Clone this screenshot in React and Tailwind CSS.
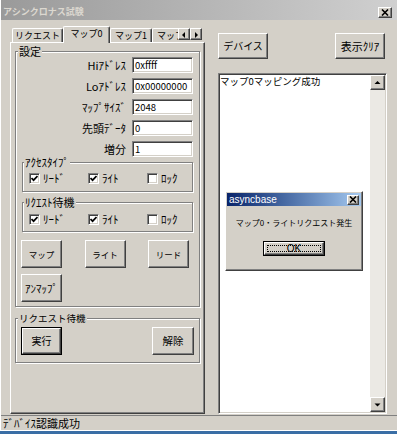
import clsx from "clsx"

const raised = "border border-t-white border-l-white border-r-[#404040] border-b-[#404040] shadow-[inset_-1px_-1px_0_#808080]"
const sunken = "border border-t-[#808080] border-l-[#808080] border-r-white border-b-white shadow-[inset_1px_1px_0_#404040,inset_-1px_-1px_0_#d4d0c8]"
const etched = "min-w-0 border border-[#808080] shadow-[inset_1px_1px_0_#ffffff,1px_1px_0_#ffffff]"

export default function App() {
  return (
    <div className="relative w-[397px] h-[434px] bg-[#3a6ea5] overflow-hidden font-['Noto_Sans_CJK_JP',sans-serif] text-black leading-none">
      <div className="h-[431px] flex flex-col bg-[#d4d0c8] border-l border-l-white">
        {/* title bar */}
        <div className="h-[20px] shrink-0 flex items-center justify-between pt-[4px] pl-[2px] pr-[5px] bg-gradient-to-r from-[#9a9a9a] to-[#d0d0d0]">
          <span className="text-[9px] font-bold text-[#dcd8d0] leading-[12px]">アシンクロナス試験</span>
          <CloseBox className="w-[14px] h-[11px]" />
        </div>

        {/* body */}
        <div className="flex-1 flex pl-[9px] pt-[6px] pb-[1px] min-h-0">
          {/* tab control */}
          <div className="w-[195px] flex flex-col">
            <div className="relative z-10 h-[16px] flex items-end pl-[2px]">
              <div className="w-[166px] flex items-end overflow-x-clip">
                <Tab className="w-[51px]">リクエスト</Tab>
                <Tab className="w-[47px]" selected>マップ0</Tab>
                <Tab className="w-[42px]">マップ1</Tab>
                <Tab className="w-[42px]">マップ2</Tab>
              </div>
              <div className="flex mb-[2px]">
                <ArrowBtn dir="left" />
                <ArrowBtn dir="right" />
              </div>
            </div>

            <div className={clsx("flex-1 pl-[4px] pt-[3px]", raised)}>
              <fieldset className={clsx("w-[185px] pb-[4px]", etched)}>
                <legend className="ml-[2px] px-[1px] text-[11px] leading-[10px] bg-[#d4d0c8]">設定</legend>
                <div className="pt-[1px] flex flex-col gap-[5px]">
                  <Field label="Hiｱﾄﾞﾚｽ" value="0xffff" />
                  <Field label="Loｱﾄﾞﾚｽ" value="0x00000000" />
                  <Field label="ﾏｯﾌﾟｻｲｽﾞ" value="2048" />
                  <Field label="先頭ﾃﾞｰﾀ" value="0" />
                  <Field label="増分" value="1" />
                </div>

                <fieldset className={clsx("mx-[6px] pt-[5px] pb-[6px]", etched)}>
                  <legend className="ml-[1px] px-[1px] text-[11px] leading-[10px] bg-[#d4d0c8]">ｱｸｾｽﾀｲﾌﾟ</legend>
                  <CheckRow />
                </fieldset>

                <fieldset className={clsx("mx-[6px] mt-[5px] pt-[6px] pb-[5px]", etched)}>
                  <legend className="ml-[1px] px-[1px] text-[11px] leading-[10px] bg-[#d4d0c8]">ﾘｸｴｽﾄ待機</legend>
                  <CheckRow />
                </fieldset>

                <div className="flex justify-between w-[168px] ml-[5px] mt-[8px]">
                  <Btn className="w-[41px] h-[28px] text-[8.5px]">マップ</Btn>
                  <Btn className="w-[41px] h-[28px] text-[8.5px]">ライト</Btn>
                  <Btn className="w-[41px] h-[28px] text-[8.5px]">リード</Btn>
                </div>
                <div className="ml-[5px] mt-[6px]">
                  <Btn className="w-[41px] h-[28px] text-[11px]">ｱﾝﾏｯﾌﾟ</Btn>
                </div>
              </fieldset>

              <fieldset className={clsx("w-[185px] mt-[6px] pt-[4px] pb-[7px]", etched)}>
                <legend className="ml-[2px] px-[1px] text-[9.5px] leading-[10px] bg-[#d4d0c8]">リクエスト待機</legend>
                <div className="flex justify-between px-[5px]">
                  <Btn isDefault className="w-[41px] h-[28px] text-[10px]">実行</Btn>
                  <Btn className="w-[42px] h-[28px] text-[10.5px]">解除</Btn>
                </div>
              </fieldset>
            </div>
          </div>

          {/* right column */}
          <div className="ml-[13px] w-[169px] flex flex-col">
            <div className="mt-[7px] flex justify-between pr-[2px]">
              <Btn className="w-[50px] h-[26px] text-[10px]">デバイス</Btn>
              <Btn className="w-[50px] h-[26px] text-[11px]">表示ｸﾘｱ</Btn>
            </div>
            <div className={clsx("mt-[14px] flex-1 flex bg-white", sunken)}>
              <div className="flex-1 pl-[1px] pt-[1px] text-[9.5px] leading-[12px]">マップ0マッピング成功</div>
              <div className="w-[15px] flex flex-col mt-[1px] mb-[1px] mr-[1px]">
                <ArrowBtn dir="up" className="w-[15px] h-[15px]" />
                <div className="flex-1 bg-[#ebe9e4]" />
                <ArrowBtn dir="down" className="w-[15px] h-[15px]" />
              </div>
            </div>
          </div>
        </div>

        {/* status bar */}
        <div className="h-[16px] shrink-0 flex items-center pl-[2px] border-t border-t-[#808080] border-b border-b-white">
          <span className="text-[11px] leading-[12px]">ﾃﾞﾊﾞｲｽ認識成功</span>
        </div>
      </div>

      {/* message box */}
      <div className={clsx("absolute left-[225px] top-[191px] w-[138px] h-[80px] bg-[#d4d0c8] p-[1px] flex flex-col", raised)}>
        <div className="h-[13px] flex items-center justify-between pl-[2px] pr-[2px] bg-gradient-to-r from-[#0a246a] to-[#a6caf0]">
          <span className="text-[10px] leading-[12px] text-white font-['Liberation_Sans',sans-serif]">asyncbase</span>
          <CloseBox className="w-[12px] h-[10px]" />
        </div>
        <div className="mt-[11px] text-center text-[8px] leading-[12px]">マップ0・ライトリクエスト発生</div>
        <div className="mt-[12px] mx-auto w-[62px] h-[15px] border border-black">
          <div className={clsx("w-full h-full flex items-center justify-center p-[2px]", raised)}>
            <div className="w-full h-full flex items-center justify-center outline outline-1 outline-dotted outline-black -outline-offset-1">
              <span className="text-[10px] leading-[10px] font-['Liberation_Sans',sans-serif]">OK</span>
            </div>
          </div>
        </div>
      </div>
    </div>
  )
}

function CheckRow() {
  return (
    <div className="flex pl-[6px]">
      <Check checked label="ﾘｰﾄﾞ" className="w-[59px]" />
      <Check checked label="ﾗｲﾄ" className="w-[59px]" />
      <Check label="ﾛｯｸ" />
    </div>
  )
}

function Field({ label, value }) {
  return (
    <div className="h-[16px] flex items-center">
      <span className="w-[110px] text-right text-[11px] leading-[12px]">{label}</span>
      <div className={clsx("ml-[6px] w-[61px] h-full bg-white flex items-center px-[2px] text-[9.5px] leading-[12px] overflow-hidden", sunken)}>
        {value}
      </div>
    </div>
  )
}

function Check({ checked, label, className }) {
  return (
    <div className={clsx("h-[13px] flex items-center gap-[3px] shrink-0", className)}>
      <span className={clsx("w-[11px] h-[11px] bg-white flex items-center justify-center", sunken)}>
        {checked && (
          <svg width="7" height="7" viewBox="0 0 7 7">
            <path d="M0.5 3 L2.6 5.2 L6.5 1" stroke="black" strokeWidth="1.7" fill="none" />
          </svg>
        )}
      </span>
      <span className="text-[11px] leading-[13px]">{label}</span>
    </div>
  )
}

function Btn({ children, className, isDefault }) {
  if (isDefault) {
    return (
      <div className={clsx("border border-black", className)}>
        <div className={clsx("w-full h-full flex items-center justify-center", raised)}>{children}</div>
      </div>
    )
  }
  return (
    <div className={clsx("flex items-center justify-center leading-[12px]", raised, className)}>
      {children}
    </div>
  )
}

function Tab({ children, className, selected }) {
  return (
    <div
      className={clsx(
        "shrink-0 flex items-center justify-center text-[9px] leading-[12px] bg-[#d4d0c8]",
        "border-t border-l border-r border-t-white border-l-white border-r-[#404040] rounded-tl-[2px] rounded-tr-[2px]",
        "shadow-[inset_-1px_0_0_#808080]",
        selected ? "relative z-10 h-[17px] -mb-px pb-[2px]" : "h-[14px]",
        className
      )}
    >
      {children}
    </div>
  )
}

function ArrowBtn({ dir, className }) {
  const paths = {
    left: "M5 2 L2 5 L5 8 Z",
    right: "M3 2 L6 5 L3 8 Z",
    up: "M1.5 6 L4.5 3 L7.5 6 Z",
    down: "M1.5 3.5 L4.5 6.5 L7.5 3.5 Z",
  }
  return (
    <div className={clsx("flex items-center justify-center bg-[#d4d0c8]", raised, className || "w-[12px] h-[12px]")}>
      <svg width="9" height="9" viewBox="0 0 9 9">
        <path d={paths[dir]} fill="black" />
      </svg>
    </div>
  )
}

function CloseBox({ className }) {
  return (
    <div className={clsx("flex items-center justify-center bg-[#d4d0c8]", raised, className)}>
      <svg width="8" height="7" viewBox="0 0 8 7">
        <path d="M1 0.5 L7 6.5 M7 0.5 L1 6.5" stroke="black" strokeWidth="1.6" />
      </svg>
    </div>
  )
}
